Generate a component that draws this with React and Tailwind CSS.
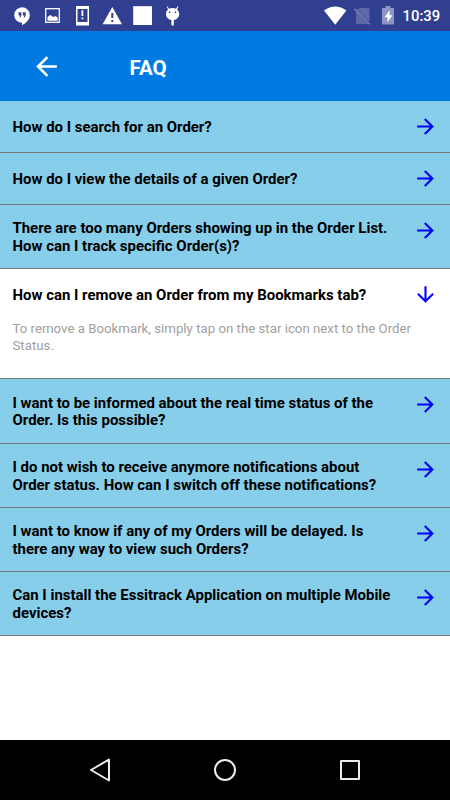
const questions = [
  { lines: ["How do I search for an Order?"], size: "h-[52px]" },
  { lines: ["How do I view the details of a given Order?"], size: "h-[52px]" },
  {
    lines: ["There are too many Orders showing up in the Order List.", "How can I track specific Order(s)?"],
    size: "h-[64px]",
  },
  {
    lines: ["How can I remove an Order from my Bookmarks tab?"],
    answer: ["To remove a Bookmark, simply tap on the star icon next to the Order", "Status."],
    size: "h-[110px]",
  },
  {
    lines: ["I want to be informed about the real time status of the", "Order. Is this possible?"],
    size: "h-[65px]",
  },
  {
    lines: ["I do not wish to receive anymore notifications about", "Order status. How can I switch off these notifications?"],
    size: "h-[64px]",
  },
  {
    lines: ["I want to know if any of my Orders will be delayed. Is", "there any way to view such Orders?"],
    size: "h-[64px]",
  },
  {
    lines: ["Can I install the Essitrack Application on multiple Mobile", "devices?"],
    size: "h-[64px]",
  },
];

function Arrow({ className }) {
  return (
    <svg viewBox="0 0 24 24" className={className} fill="currentColor">
      <path d="M12 4l-1.41 1.41L16.17 11H4v2h12.17l-5.58 5.59L12 20l8-8z" />
    </svg>
  );
}

function StatusBar() {
  return (
    <div className="flex h-[31px] shrink-0 items-center bg-[#303f8f]">
      <svg width="200" height="31" className="block" fill="#fff">
        <path
          fillRule="evenodd"
          d="M22 7.2a8 8 0 0 0-7.8 7.9c0 4.3 3.5 7.6 7.8 7.6v2.6c4.2-2 7.8-5.8 7.8-10.2A7.9 7.9 0 0 0 22 7.2zM18.6 12.3h2.8v3.2l-1.1 2h-1l.8-2h-1.5zM22.9 12.3h2.8v3.2l-1.1 2h-1l.8-2h-1.5z"
        />
        <rect x="45.7" y="8.7" width="13.6" height="13.6" fill="none" stroke="#fff" strokeWidth="1.3" />
        <path d="M47.5 20.7v-3.6l2.8-2 3 2 2.2-1 2.2 1.4v3.2z" />
        <path fillRule="evenodd" d="M76 6h13v19.5H76zM77.5 9h10v13h-10z" />
        <path d="M81.5 10.3h1.8v5.6h-1.8zM81.5 17.5h1.8v1.8h-1.8z" />
        <path
          fillRule="evenodd"
          d="M112.3 7l9.7 17.2h-19.4zM111.3 13v5h2v-5zM111.3 20v2h2v-2z"
        />
        <rect x="133.2" y="6.2" width="18.8" height="18.8" />
        <path
          fillRule="evenodd"
          d="M167.3 6.2l1.8 2.6a8 8 0 0 1 6.8 0l1.8-2.6.8.5-1.4 2.9c1.3 1.2 2.1 2.6 2.1 4.4 0 3.2-2.4 5.6-5.4 6.1v5.3h-2.4v-5.3c-3-.5-5.4-2.9-5.4-6.1 0-1.8.8-3.2 2.1-4.4l-1.4-2.9zM168.8 11.6v1.5h1.5v-1.5zM174.7 11.6v1.5h1.5v-1.5z"
        />
      </svg>
      <svg width="90" height="31" viewBox="310 0 90 31" className="ml-auto block">
        <path d="M324 10.6Q335.2 2.6 346.4 10.6L335.2 24.8z" fill="#fff" />
        <path d="M360 8h8.5q1 0 1 1v13.5L356.8 9.8zM356 11.5V23q0 1 1 1h11.3z" fill="#5d68a7" />
        <path d="M354.4 8.8L369.6 24.4" stroke="#7f88bb" strokeWidth="1.3" />
        <path d="M382 8h3.5V6h5v2h3.5v16.5h-12z" fill="#8e95c2" />
        <path d="M389.6 10.3l-5.1 7h3v5l5-7h-2.9z" fill="#fff" />
      </svg>
      <span className="w-[50px] pt-px pl-[2.6px] text-[14.8px] leading-4 font-medium text-white">10:39</span>
    </div>
  );
}

function Question({ item }) {
  const open = Boolean(item.answer);
  return (
    <section
      className={`flex shrink-0 items-start border-b border-[#777777] pl-[12.5px] ${item.size} ${open ? "bg-white" : "bg-[#87ceeb]"}`}
    >
      <div className={open ? "min-w-0 flex-1 pt-[17.5px]" : "flex min-w-0 flex-1 flex-col justify-center self-stretch pt-[2px]"}>
        <h2 className="text-[14.95px] leading-[17.3px] font-bold whitespace-nowrap text-black">
          {item.lines.map((line) => (
            <span key={line} className="block">{line}</span>
          ))}
        </h2>
        {open && (
          <p className="mt-[17px] text-[13.25px] leading-[16.8px] whitespace-nowrap text-[#a0a0a0]">
            {item.answer.map((line) => (
              <span key={line} className="block">{line}</span>
            ))}
          </p>
        )}
      </div>
      <Arrow className={`mt-[13px] mr-[12.5px] size-[25px] shrink-0 text-[#0000ff] ${open ? "rotate-90" : ""}`} />
    </section>
  );
}

export default function App() {
  return (
    <div className="flex h-[800px] w-[450px] flex-col overflow-hidden bg-white font-[Roboto,sans-serif]">
      <StatusBar />
      <header className="flex h-[70px] shrink-0 items-center bg-[#007ae3] text-white">
        <Arrow className="ml-[31px] size-[31px] rotate-180" />
        <h1 className="ml-[67.5px] pt-[3px] text-[20.5px] leading-6 font-bold">FAQ</h1>
      </header>
      <main className="flex flex-1 flex-col">
        {questions.map((item) => (
          <Question key={item.lines[0]} item={item} />
        ))}
      </main>
      <nav className="h-[60px] shrink-0 bg-black">
        <svg width="450" height="60" fill="none" stroke="#ececec" strokeWidth="2" strokeLinejoin="round">
          <path d="M109 19.5v21L91 30z" />
          <circle cx="225" cy="30" r="10" />
          <rect x="341" y="21" width="18" height="18" />
        </svg>
      </nav>
    </div>
  );
}
